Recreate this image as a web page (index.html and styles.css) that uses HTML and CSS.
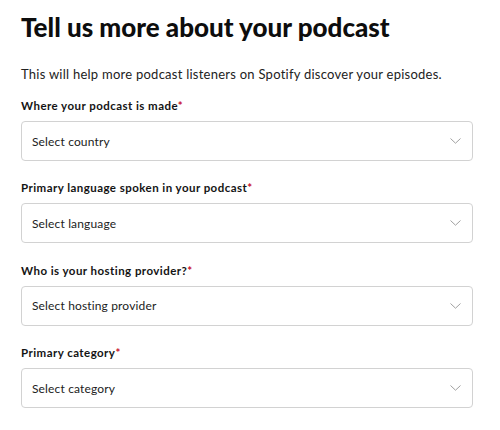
FILE: index.html
```html
<!DOCTYPE html>
<html lang="en">
<head>
<meta charset="utf-8">
<title>Tell us more about your podcast</title>
<link rel="stylesheet" href="styles.css">
</head>
<body>
<main class="page">
  <h1 class="title">Tell us more about your podcast</h1>
  <p class="intro">This will help more podcast listeners on Spotify discover your episodes.</p>
  <div class="fields">
    <div class="field">
      <label class="label">Where your podcast is made<span class="req">*</span></label>
      <div class="select"><span class="value">Select country</span><svg class="chev" width="11" height="6" viewBox="0 0 11 6"><path d="M0.5 0.5 L5.5 5.2 L10.5 0.5" fill="none" stroke="#a0a0a0" stroke-width="1"/></svg></div>
    </div>
    <div class="field">
      <label class="label">Primary language spoken in your podcast<span class="req">*</span></label>
      <div class="select"><span class="value">Select language</span><svg class="chev" width="11" height="6" viewBox="0 0 11 6"><path d="M0.5 0.5 L5.5 5.2 L10.5 0.5" fill="none" stroke="#a0a0a0" stroke-width="1"/></svg></div>
    </div>
    <div class="field">
      <label class="label">Who is your hosting provider?<span class="req">*</span></label>
      <div class="select"><span class="value">Select hosting provider</span><svg class="chev" width="11" height="6" viewBox="0 0 11 6"><path d="M0.5 0.5 L5.5 5.2 L10.5 0.5" fill="none" stroke="#a0a0a0" stroke-width="1"/></svg></div>
    </div>
    <div class="field">
      <label class="label">Primary category<span class="req">*</span></label>
      <div class="select"><span class="value">Select category</span><svg class="chev" width="11" height="6" viewBox="0 0 11 6"><path d="M0.5 0.5 L5.5 5.2 L10.5 0.5" fill="none" stroke="#a0a0a0" stroke-width="1"/></svg></div>
    </div>
  </div>
</main>
</body>
</html>
```

FILE: styles.css
```css
* { box-sizing: border-box; }
html, body { margin: 0; padding: 0; background: #fff; }
body {
  font-family: "Lato", "Noto Sans", sans-serif;
  color: #141414;
  width: 500px;
  height: 430px;
  overflow: hidden;
}
.page {
  padding: 12px 27px 0 21px;
  display: flex;
  flex-direction: column;
}
.title {
  margin: 0;
  font-size: 26px;
  line-height: 30px;
  font-weight: 900;
  letter-spacing: 0;
  color: #0d0d0d;
}
.intro {
  margin: 23px 0 0;
  font-size: 13px;
  line-height: 18px;
  letter-spacing: 0.25px;
  color: #222;
}
.fields {
  margin-top: 15px;
  display: flex;
  flex-direction: column;
  gap: 19.4px;
}
.field {
  display: flex;
  flex-direction: column;
  gap: 7px;
}
.label {
  font-size: 11.5px;
  line-height: 16px;
  font-weight: 700;
  letter-spacing: 0.45px;
  color: #141414;
}
.req { color: #c8102e; }
.select {
  height: 40px;
  border: 1px solid #d2d2d2;
  border-radius: 4px;
  display: flex;
  align-items: center;
  justify-content: space-between;
  padding: 0 11px 0 10px;
  background: #fff;
}
.value {
  font-size: 12px;
  letter-spacing: 0.15px;
  color: #222;
}
.chev { display: block; }
```
